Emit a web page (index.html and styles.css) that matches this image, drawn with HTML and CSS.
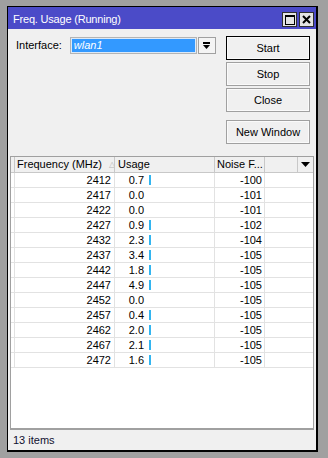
FILE: index.html
```html
<!DOCTYPE html>
<html lang="en">
<head>
  <meta charset="UTF-8">
  <meta name="viewport" content="width=device-width, initial-scale=1.0">
  <title>Freq. Usage</title>
  <link rel="stylesheet" href="styles.css">
</head>
<body>
  <div class="window">
    <!-- title bar -->
    <div class="titlebar">
      <span class="title">Freq. Usage (Running)</span>
      <div class="tb-buttons">
        <span class="tb-btn">
          <svg width="10" height="10" viewBox="0 0 10 10"><rect x="0.5" y="0.5" width="9" height="9" fill="none" stroke="#000"/><rect x="0" y="0" width="10" height="2" fill="#000"/></svg>
        </span>
        <span class="tb-btn">
          <svg width="9" height="9" viewBox="0 0 9 9"><path d="M1 1 L8 8 M8 1 L1 8" stroke="#000" stroke-width="2"/></svg>
        </span>
      </div>
    </div>

    <div class="content">
      <div class="top">
        <div class="form">
          <label class="label">Interface:</label>
          <div class="combo">
            <div class="combo-input">wlan1</div>
            <div class="combo-btn">
              <svg width="7" height="8" viewBox="0 0 7 8"><rect x="0" y="0" width="7" height="2" fill="#000"/><path d="M0 3 H7 L3.5 7 Z" fill="#000"/></svg>
            </div>
          </div>
        </div>
        <div class="actions">
          <button class="btn btn-default">Start</button>
          <button class="btn">Stop</button>
          <button class="btn">Close</button>
          <button class="btn btn-new">New Window</button>
        </div>
      </div>

      <!-- list -->
      <div class="list">
        <div class="list-head">
          <div class="hcell"></div>
          <div class="hcell">Frequency (MHz) <span class="sort">&#9651;</span></div>
          <div class="hcell hcell-usage">Usage</div>
          <div class="hcell">Noise F...</div>
          <div class="hcell"></div>
          <div class="hcell hcell-menu">
            <svg width="9" height="5" viewBox="0 0 9 5"><path d="M0 0 H9 L4.5 5 Z" fill="#000"/></svg>
          </div>
        </div>
        <div class="list-body" id="rows"></div>
      </div>

      <div class="status">13 items</div>
    </div>
  </div>

  <script>
    // frequency, usage, noise floor
    const rows = [
      [2412, '0.7', -100], [2417, '0.0', -101], [2422, '0.0', -101],
      [2427, '0.9', -102], [2432, '2.3', -104], [2437, '3.4', -105],
      [2442, '1.8', -105], [2447, '4.9', -105], [2452, '0.0', -105],
      [2457, '0.4', -105], [2462, '2.0', -105], [2467, '2.1', -105],
      [2472, '1.6', -105]
    ];

    const body = document.getElementById('rows');
    rows.forEach(([freq, usage, noise]) => {
      const row = document.createElement('div');
      row.className = 'row';
      const bar = usage !== '0.0' ? '<span class="bar"></span>' : '';
      row.innerHTML = `
        <div class="cell"></div>
        <div class="cell cell-freq">${freq}</div>
        <div class="cell cell-usage"><span class="val">${usage}</span>${bar}</div>
        <div class="cell cell-noise">${noise}</div>
        <div class="cell cell-rest"></div>
      `;
      body.appendChild(row);
    });
  </script>
</body>
</html>
```

FILE: styles.css
```css
* { margin: 0; padding: 0; box-sizing: border-box; }
body { background: #a0a0a0; font-family: "Liberation Sans", Arial, sans-serif; font-size: 11px; color: #000; padding: 6px 0 0 7px; }

/* window frame */
.window { width: 311px; height: 446px; border: 1px solid #000; border-right-width: 2px; border-bottom-width: 2px; background: #f0f0f0; display: flex; flex-direction: column; }

.titlebar { height: 22px; background: #4b4bc8; display: flex; justify-content: space-between; padding: 0 2px 0 5px; }
.title { color: #fff; font-size: 11px; letter-spacing: -0.2px; line-height: 25px; }
.tb-buttons { display: flex; gap: 2px; padding-top: 5px; }
.tb-btn { width: 15px; height: 15px; background: #e4e4e4; border: 1px solid #303030; display: flex; align-items: center; justify-content: center; }

/* main area */
.content { flex: 1; display: flex; flex-direction: column; padding: 7px 1px 0 2px; }
.top { display: flex; justify-content: space-between; }
.form { display: flex; align-items: center; height: 17px; margin-top: 1px; padding-left: 6px; gap: 8px; }
.label { line-height: 17px; }
.combo { display: flex; gap: 1px; }
.combo-input { width: 127px; height: 17px; border: 1px solid #b4b4b4; background: #3399ff; box-shadow: inset 0 0 0 1px #dce9f7; color: #fff; font-style: italic; line-height: 15px; padding-left: 3px; }
.combo-btn { width: 18px; height: 17px; border: 1px solid #a0a0a0; background: #f4f4f4; display: flex; align-items: center; justify-content: center; }

.actions { display: flex; flex-direction: column; gap: 2px; margin-right: 5px; }
.btn { width: 84px; height: 24px; font-family: inherit; font-size: 11px; background: #f0f0f0; border: 1px solid #a0a0a0; box-shadow: inset 0 0 0 1px #fafafa; color: #000; }
.btn-default { border-color: #000; }
.btn-new { margin-top: 6px; }

/* list */
.list { flex: 1; margin-top: 12px; width: 304px; border: 1px solid #a0a0a0; border-bottom-width: 2px; background: #fff; display: flex; flex-direction: column; }
.list-head { display: grid; grid-template-columns: 4px 100px 100px 50px 33px 1fr; height: 16px; border-bottom: 1px solid #c8c8c8; background: #f0f0f0; }
.hcell { border-right: 1px solid #c8c8c8; line-height: 15px; padding-left: 2px; white-space: nowrap; overflow: hidden; }
.hcell:first-child { padding: 0; }
.hcell-usage { padding-left: 3px; }
.hcell-menu { border-right: none; display: flex; align-items: center; justify-content: center; padding: 0; }
.sort { color: #b8b8b8; font-size: 8px; margin-left: 4px; vertical-align: 1px; }

.row { display: grid; grid-template-columns: 4px 100px 100px 50px 1fr; height: 15px; border-bottom: 1px solid #e2e2e2; }
.cell { border-right: 1px solid #e2e2e2; line-height: 14px; white-space: nowrap; }
.cell-freq { text-align: right; padding-right: 3px; }
.cell-usage { display: flex; align-items: center; }
.cell-usage .val { width: 29px; text-align: right; }
.bar { width: 2px; height: 10px; margin-left: 5px; background: #33b5f0; }
.cell-noise { text-align: right; padding-right: 2px; }
.cell-rest { border-right: none; }

.status { height: 20px; line-height: 20px; padding-left: 3px; color: #101030; font-size: 11px; }
```
